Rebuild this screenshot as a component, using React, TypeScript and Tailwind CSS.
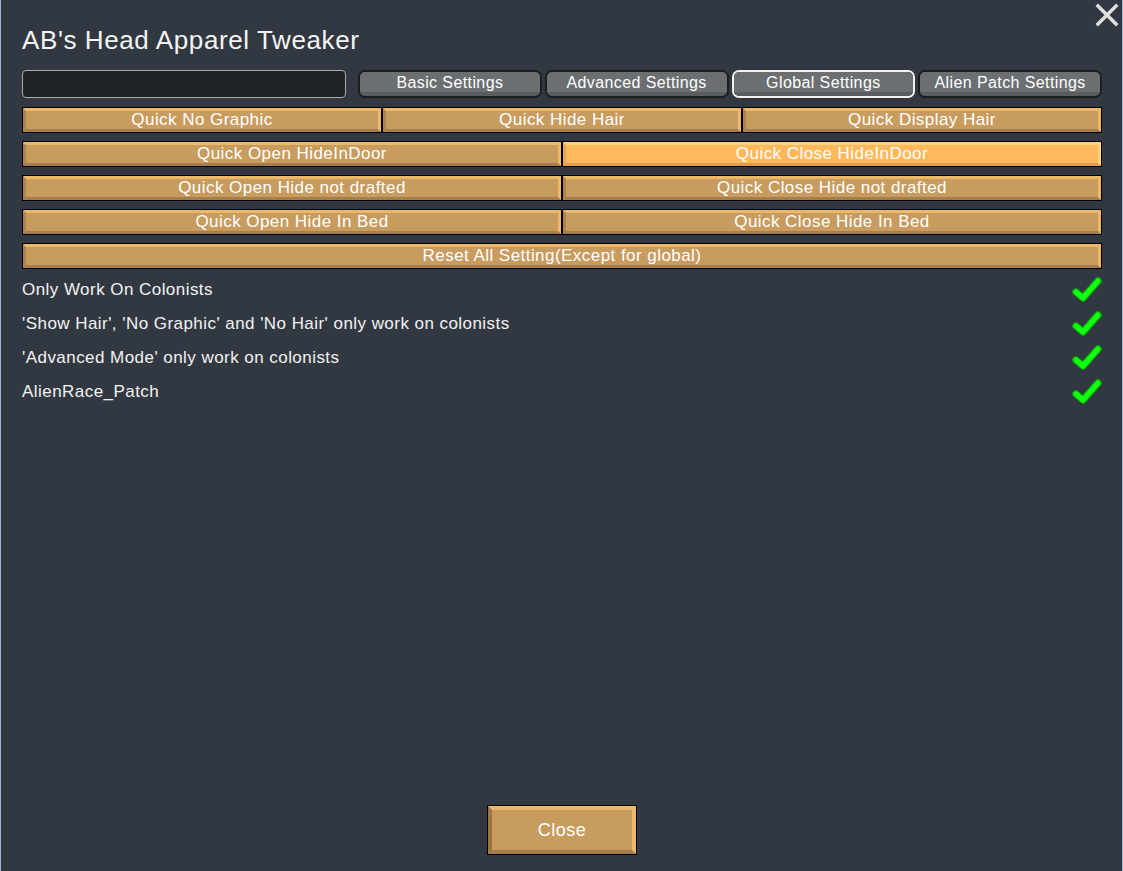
import React from "react";

const font = { fontFamily: '"Liberation Sans", Arial, sans-serif' };

function BevelButton({ label, hot = false, className = "" }: { label: string; hot?: boolean; className?: string }) {
  return (
    <div className={`flex-1 border border-black ${className}`}>
      <div
        className={
          hot
            ? "h-full flex items-center justify-center border-[3px] border-t-[#ffd27e] border-r-[#ffd27e] border-b-[#e09c4a] border-l-[#eaa752] bg-[#ffb95d] text-white text-[17px] tracking-[0.45px]"
            : "h-full flex items-center justify-center border-[3px] border-t-[#ebb968] border-r-[#ebb968] border-b-[#a67e4c] border-l-[#ad8450] bg-[#c89b5f] text-white text-[17px] tracking-[0.45px]"
        }
      >
        {label}
      </div>
    </div>
  );
}

function Tab({ label, active = false }: { label: string; active?: boolean }) {
  return (
    <div
      className={`flex-1 h-[28px] rounded-[7px] border-2 overflow-hidden flex flex-col ${
        active ? "border-[#f2f2f2]" : "border-[#1b1d20]"
      }`}
    >
      <div className="flex-1 pt-[2px] bg-[#6c6f72] flex items-center justify-center text-white text-[16px] tracking-[0.4px] leading-none">
        {label}
      </div>
      <div className="h-[4px] bg-[#5a5c5f]" />
    </div>
  );
}

function Check() {
  return (
    <svg width="30" height="26" viewBox="0 0 30 26">
      <polyline points="4,15 11,21 26,4" fill="none" stroke="#06a806" strokeWidth="7.5" strokeLinecap="round" strokeLinejoin="round" />
      <polyline points="4,15 11,21 26,4" fill="none" stroke="#14ff14" strokeWidth="5" strokeLinecap="round" strokeLinejoin="round" />
    </svg>
  );
}

const options = [
  "Only Work On Colonists",
  "'Show Hair', 'No Graphic' and 'No Hair' only work on colonists",
  "'Advanced Mode' only work on colonists",
  "AlienRace_Patch",
];

export default function App() {
  return (
    <div
      style={font}
      className="relative h-screen w-full bg-[#323841] border-l border-r border-[#a3b6d3] flex flex-col pl-[21px] pr-[20px] pt-[24px] pb-[16px] text-white overflow-hidden"
    >
      {/* close x */}
      <svg className="absolute right-[3px] top-[3px]" width="24" height="24" viewBox="0 0 24 24">
        <path d="M3 3 L21 21 M21 3 L3 21" stroke="#dedede" strokeWidth="3.6" strokeLinecap="square" />
      </svg>

      <h1 className="text-[26px] leading-[32px] tracking-[0.6px] text-[#f4f4f4]">AB's Head Apparel Tweaker</h1>

      <div className="mt-[14px] flex items-center h-[28px]">
        <div className="w-[324px] h-[28px] rounded-[4px] border border-[#a8a8a8] bg-[#1e2126]" />
        <div className="ml-[12px] flex-1 flex gap-[3px]">
          <Tab label="Basic Settings" />
          <Tab label="Advanced Settings" />
          <Tab label="Global Settings" active />
          <Tab label="Alien Patch Settings" />
        </div>
      </div>

      <div className="mt-[9px] flex flex-col gap-[8px]">
        <div className="flex h-[26px]">
          <BevelButton label="Quick No Graphic" />
          <BevelButton label="Quick Hide Hair" />
          <BevelButton label="Quick Display Hair" />
        </div>
        <div className="flex h-[26px]">
          <BevelButton label="Quick Open HideInDoor" />
          <BevelButton label="Quick Close HideInDoor" hot />
        </div>
        <div className="flex h-[26px]">
          <BevelButton label="Quick Open Hide not drafted" />
          <BevelButton label="Quick Close Hide not drafted" />
        </div>
        <div className="flex h-[26px]">
          <BevelButton label="Quick Open Hide In Bed" />
          <BevelButton label="Quick Close Hide In Bed" />
        </div>
        <div className="flex h-[26px]">
          <BevelButton label="Reset All Setting(Except for global)" />
        </div>
      </div>

      <div className="mt-[4px] flex-1 flex flex-col">
        {options.map((o) => (
          <div key={o} className="h-[34px] flex items-center justify-between">
            <span className="text-[17px] tracking-[0.45px] text-[#f2f2f2]">{o}</span>
            <Check />
          </div>
        ))}
      </div>

      <div className="flex justify-center">
        <div className="w-[150px] h-[50px] border border-black">
          <div className="h-full flex items-center justify-center border-[4px] border-t-[#ebb968] border-r-[#ebb968] border-b-[#a67e4c] border-l-[#9c7544] bg-[#c89b5f] text-white text-[18px] tracking-[0.5px]">
            Close
          </div>
        </div>
      </div>
    </div>
  );
}
